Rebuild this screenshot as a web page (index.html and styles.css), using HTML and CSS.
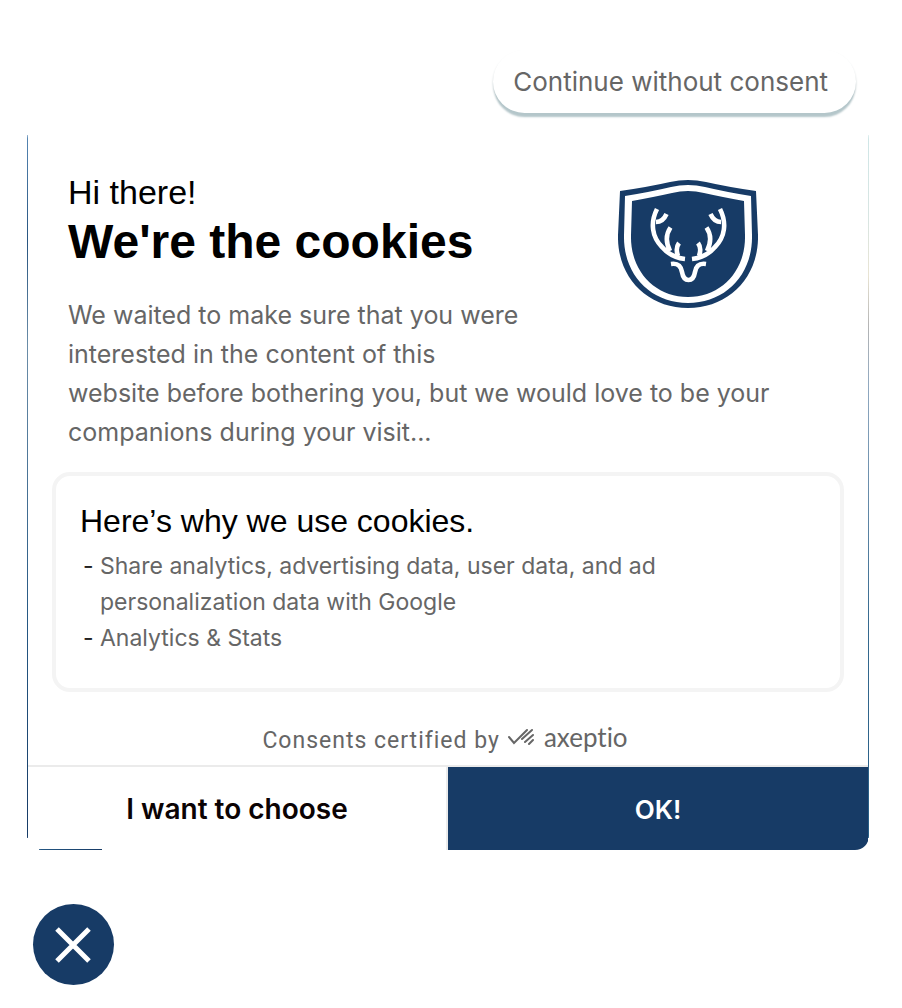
FILE: index.html
```html
<!DOCTYPE html>
<html lang="en">
<head>
<meta charset="utf-8">
<meta name="viewport" content="width=device-width, initial-scale=1">
<title>Cookie consent</title>
<link rel="stylesheet" href="styles.css">
</head>
<body>
<main class="consent">
  <button class="skip" type="button">Continue without consent</button>
  <section class="card">
    <div class="intro">
      <svg class="crest" viewBox="0 0 140 129" aria-hidden="true">
        <path fill="#173b66" d="M2 11Q30 7 52 2Q70-2 88 2Q110 7 138 11L140 55C141 98 110 128 70 128S-1 98 0 55Z"/>
        <path fill="#fff" d="M7 16Q32 12 53 7Q70 3 87 7Q108 12 133 16L134 55C135 95 107 123 70 123S5 95 6 55Z"/>
        <path fill="#173b66" d="M14 21Q36 17 54 13Q70 9 86 13Q104 17 126 21L127 55C128 91 103 117 70 117S12 91 13 55Z"/>
        <g fill="none" stroke="#fff" stroke-width="4.6">
          <path d="M39 29C32 43 34 57 44 67C50 74 58 78 67 79M48.500 34Q45 42 38 42M52.500 47.500C48 54 47 61 52 71M61 63C58 67 58.500 72 60 76"/>
          <path d="M102 29C109 43 107 57 97 67C91 74 83 78 74 79M92.500 34Q96 42 103 42M88.500 47.500C93 54 94 61 89 71M80 63C83 67 82.500 72 81 76"/>
          <path d="M53 84C60 83 63 86 64 92C65 98 67 100 70.500 100S76 98 77 92C78 86 81 83 88 84"/>
        </g>
      </svg>
      <p class="hello">Hi there!</p>
      <h1 class="title">We're the cookies</h1>
      <p class="text">We waited to make sure that you were<br>interested in the content of this<br>website before bothering you, but we would love to be your companions during your visit...</p>
    </div>
    <div class="reasons">
      <h2 class="reasons-title">Here’s why we use cookies.</h2>
      <ul class="reasons-list">
        <li>Share analytics, advertising data, user data, and ad<br>personalization data with Google</li>
        <li>Analytics &amp; Stats</li>
      </ul>
    </div>
    <p class="certified">Consents certified by
      <span class="brand">
        <svg class="brand-mark" viewBox="0 0 26 18" fill="none" stroke="#666" stroke-width="2" stroke-linecap="round" aria-hidden="true"><path d="M1 9L6 15L19 2M14 11L24 2M17 14L25 7M21 16L25 12"/></svg>
        <span class="brand-name">axeptio</span>
      </span>
    </p>
    <div class="actions">
      <button class="action" type="button">I want to choose</button>
      <button class="action action-ok" type="button">OK!</button>
    </div>
  </section>
  <button class="close" type="button" aria-label="Close">
    <svg class="close-icon" viewBox="0 0 36 36" fill="none" stroke="#fff" stroke-width="5" aria-hidden="true"><path d="M2 2L34 34M34 2L2 34"/></svg>
  </button>
</main>
</body>
</html>
```
FILE: styles.css
```css
* { box-sizing: border-box; }

body {
  margin: 0;
  background: #fff;
  color: #000;
  font-family: Inter, Roboto, sans-serif;
}

button {
  border: 0;
  font-family: inherit;
  cursor: pointer;
}

p, h1, h2, ul { margin: 0; }

.consent {
  display: flex;
  flex-direction: column;
  padding: 50px 33px 20px 27px;
}

.skip {
  align-self: flex-end;
  margin: 0 13px 12px 0;
  padding: 12px 28px 12px 20px;
  min-width: 362px;
  border-radius: 32px;
  background: #fff;
  box-shadow: 0 5px 2px -1px #b4c6ca, 0 2px 3px -1px #8b9a9e;
  color: #666;
  font-size: 26px;
  line-height: 39px;
  text-align: left;
  white-space: nowrap;
}

.card {
  overflow: hidden;
  padding: 0 1px;
  border-radius: 14px;
  background:
    linear-gradient(#5686b3, #285580 15%, #6b8da8 30%, #245783 70%, #173b66) left 10px / 1px calc(100% - 22px) no-repeat,
    linear-gradient(#cfe6e7, #d8e5e2 12%, #e9e4d3 20%, #b5b5b5 27%, #8fa8c0 36%, #35698f 70%, #285f87) right 10px / 1px calc(100% - 22px) no-repeat,
    linear-gradient(90deg, #245783, #173b66) 12px 100% / 63px 1px no-repeat,
    #fff;
}

.intro { padding: 47px 40px 20px; }

.crest {
  float: right;
  width: 140px;
  height: 129px;
  margin: 8px 70px 0 80px;
}

.hello {
  margin-bottom: 2px;
  font: 34px/40px "Liberation Sans", Arial, sans-serif;
}

.title {
  margin-bottom: 26px;
  font: bold 48px/56px "Liberation Sans", Arial, sans-serif;
}

.text {
  color: #666;
  font-size: 25px;
  line-height: 39px;
}

.reasons {
  margin: 0 24px 33px;
  padding: 23px 24px 32px;
  border: 4px solid #f4f4f4;
  border-radius: 18px;
}

.reasons-title {
  margin-bottom: 5px;
  font: 32px/44px "Liberation Sans", Arial, sans-serif;
}

.reasons-list {
  padding: 0 0 0 20px;
  list-style: none;
  color: #666;
  font-size: 23px;
  line-height: 36px;
}

.reasons-list li::before {
  content: "-";
  float: left;
  width: 17px;
  margin-left: -17px;
  color: #222;
}

.certified {
  display: flex;
  justify-content: center;
  gap: 8px;
  margin-bottom: 8px;
  padding-right: 6px;
  color: #666;
  font: 23px/32px Roboto, sans-serif;
  letter-spacing: 1px;
}

.brand {
  display: flex;
  align-items: center;
  align-self: flex-start;
  gap: 10px;
  line-height: 24px;
  letter-spacing: 0;
}

.brand-mark {
  width: 26px;
  height: 18px;
}

.brand-name {
  font-family: Lato, sans-serif;
  font-size: 26px;
  font-variant-ligatures: none;
}

.actions {
  display: grid;
  grid-template-columns: 1fr 1fr;
  border-top: 2px solid #ebebeb;
}

.action {
  padding: 23px 20px 21px;
  border-right: 2px solid #ebebeb;
  background: transparent;
  color: #0b0304;
  font-size: 28px;
  font-weight: 600;
  line-height: 39px;
}

.action-ok {
  border-right: 0;
  background: #173b66;
  color: #fff;
  font-size: 26px;
}

.close {
  display: grid;
  place-items: center;
  width: 81px;
  height: 81px;
  margin: 54px 0 0 6px;
  padding: 0 2px 0 0;
  border-radius: 50%;
  background: #173b66;
}

.close-icon {
  width: 36px;
  height: 36px;
}
```
